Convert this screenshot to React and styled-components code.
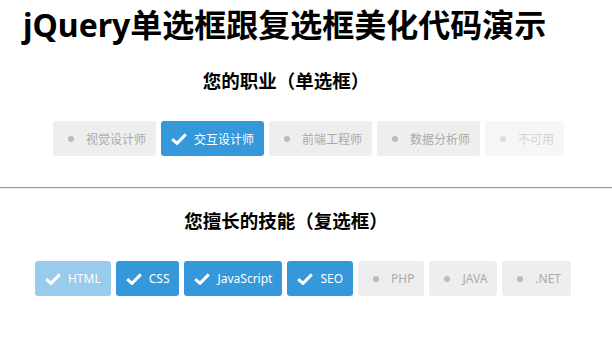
import React from "react";
import styled, { createGlobalStyle } from "styled-components";

const Global = createGlobalStyle`
  html, body { margin: 0; padding: 0; background: #fff; }
  body { font-family: "Noto Sans", "Noto Sans CJK SC", sans-serif; color: #000; }
`;

const Page = styled.div`
  width: 612px;
`;

const Title = styled.h1`
  margin: 0;
  padding: 6px 0 0 23px;
  font-size: 32px;
  line-height: 38px;
  font-weight: 700;
  font-family: "Noto Sans", "Noto Sans CJK SC", sans-serif;
`;

const Section = styled.section`
  display: flex;
  flex-direction: column;
  margin-top: ${(p) => p.$top}px;
`;

const Heading = styled.h3`
  margin: 0;
  padding-right: 40px;
  text-align: center;
  font-size: 18.5px;
  line-height: 24px;
  font-weight: 700;
  font-family: "Noto Sans CJK SC", sans-serif;
`;

const Row = styled.div`
  display: flex;
  justify-content: center;
  gap: 5px;
  margin-top: 29px;
  margin-left: ${(p) => p.$shift}px;
`;

const Option = styled.label`
  display: flex;
  align-items: center;
  gap: 7px;
  height: 35px;
  box-sizing: border-box;
  padding: 0 10px;
  border-radius: 3px;
  font-size: 12px;
  font-family: "Noto Sans", "Noto Sans CJK SC", sans-serif;
  background: ${(p) => (p.$checked ? "#3498db" : "#eeeeee")};
  color: ${(p) => (p.$checked ? "#ffffff" : "#aaaaaa")};
  opacity: ${(p) => (p.$disabled ? 0.5 : 1)};
  cursor: pointer;
  white-space: nowrap;
`;

const IconBox = styled.span`
  width: 16px;
  height: 16px;
  display: flex;
  align-items: center;
  justify-content: center;
`;

const Dot = styled.span`
  width: 6px;
  height: 6px;
  border-radius: 50%;
  background: #bbbbbb;
`;

const Divider = styled.hr`
  margin: 31px 0 0;
  border: 0;
  border-top: 1px solid #999999;
  border-bottom: 1px solid #eeeeee;
  height: 0;
`;

const Check = () => (
  <svg width="16" height="12" viewBox="0 0 16 12">
    <path d="M1.2 6.2 L6 10.4 L14.8 1.4" fill="none" stroke="#fff" strokeWidth="3" />
  </svg>
);

const Item = ({ label, checked, disabled }) => (
  <Option $checked={checked} $disabled={disabled}>
    <IconBox>{checked ? <Check /> : <Dot />}</IconBox>
    <span>{label}</span>
  </Option>
);

const jobs = [
  { label: "视觉设计师" },
  { label: "交互设计师", checked: true },
  { label: "前端工程师" },
  { label: "数据分析师" },
  { label: "不可用", disabled: true },
];

const skills = [
  { label: "HTML", checked: true, disabled: true },
  { label: "CSS", checked: true },
  { label: "JavaScript", checked: true },
  { label: "SEO", checked: true },
  { label: "PHP" },
  { label: "JAVA" },
  { label: ".NET" },
];

export default function App() {
  return (
    <Page>
      <Global />
      <Title>jQuery单选框跟复选框美化代码演示</Title>
      <Section $top={24}>
        <Heading>您的职业（单选框）</Heading>
        <Row $shift={5}>
          {jobs.map((j) => (
            <Item key={j.label} {...j} />
          ))}
        </Row>
      </Section>
      <Divider />
      <Section $top={19}>
        <Heading>您擅长的技能（复选框）</Heading>
        <Row $shift={-6}>
          {skills.map((s) => (
            <Item key={s.label} {...s} />
          ))}
        </Row>
      </Section>
    </Page>
  );
}
